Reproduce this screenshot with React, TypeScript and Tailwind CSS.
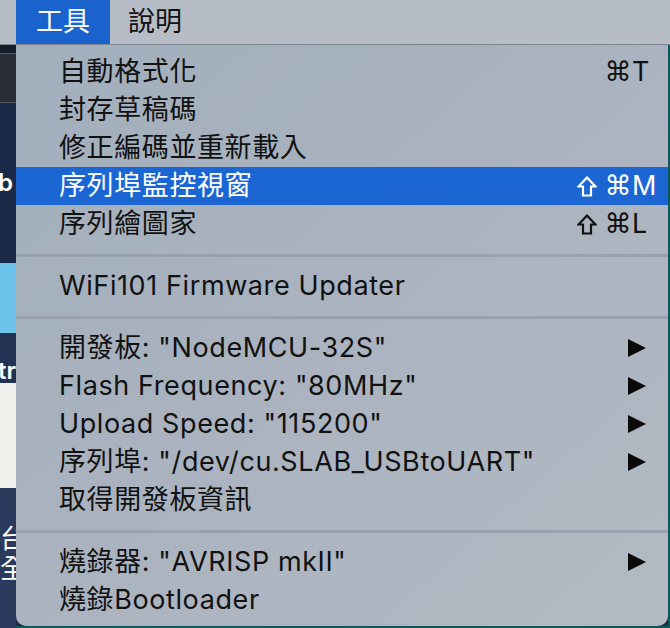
import React from "react";

type Item =
  | { kind: "sep" }
  | {
      kind: "item";
      label: string;
      shift?: boolean;
      keyChar?: string;
      sub?: boolean;
      active?: boolean;
    };

const items: Item[] = [
  { kind: "item", label: "自動格式化", keyChar: "T" },
  { kind: "item", label: "封存草稿碼" },
  { kind: "item", label: "修正編碼並重新載入" },
  { kind: "item", label: "序列埠監控視窗", shift: true, keyChar: "M", active: true },
  { kind: "item", label: "序列繪圖家", shift: true, keyChar: "L" },
  { kind: "sep" },
  { kind: "item", label: "WiFi101 Firmware Updater" },
  { kind: "sep" },
  { kind: "item", label: '開發板: "NodeMCU-32S"', sub: true },
  { kind: "item", label: 'Flash Frequency: "80MHz"', sub: true },
  { kind: "item", label: 'Upload Speed: "115200"', sub: true },
  { kind: "item", label: '序列埠: "/dev/cu.SLAB_USBtoUART"', sub: true },
  { kind: "item", label: "取得開發板資訊" },
  { kind: "sep" },
  { kind: "item", label: '燒錄器: "AVRISP mkII"', sub: true },
  { kind: "item", label: "燒錄Bootloader" },
];

const font = { fontFamily: 'Inter, "Noto Sans CJK TC", sans-serif' };

const Arrow = ({ white }: { white?: boolean }) => (
  <svg width="18" height="18" viewBox="0 0 18 18" className="mr-[16px]">
    <polygon points="0,0 18,9 0,18" fill={white ? "#fff" : "#0a0a0a"} />
  </svg>
);

// outlined shift arrow ⇧
const Shift = () => (
  <svg width="20" height="21" viewBox="0 0 20 21" className="mr-[7px]">
    <polygon
      points="10,1.5 18.5,10.5 14,10.5 14,19.5 6,19.5 6,10.5 1.5,10.5"
      fill="none"
      stroke="currentColor"
      strokeWidth="2.2"
      strokeLinejoin="miter"
    />
  </svg>
);

const MenuRow = ({ item }: { item: Item }) => {
  if (item.kind === "sep") {
    return (
      <div className="h-[24px] flex items-center">
        <div className="w-full h-[3px] bg-[#98a1ad]" />
      </div>
    );
  }
  return (
    <div
      className={`h-[38px] flex items-center pl-[43px] pr-[6px] text-[27px] tracking-[0.6px] ${
        item.active ? "bg-[#1b66d2] text-white" : "text-[#111]"
      }`}
    >
      <span className="flex-1 whitespace-nowrap">{item.label}</span>
      {item.keyChar && (
        <span className="flex items-center">
          {item.shift && <Shift />}
          <span
            className="text-[27px]"
            style={{ fontFamily: '"DejaVu Sans", sans-serif' }}
          >
            ⌘
          </span>
          <span className="w-[30px]">{item.keyChar}</span>
        </span>
      )}
      {item.sub && <Arrow white={item.active} />}
    </div>
  );
};

const App = () => {
  return (
    <div
      className="w-[670px] h-[628px] overflow-hidden flex flex-col bg-[#1d2b47]"
      style={font}
    >
      {/* menu bar */}
      <div className="h-[45px] flex bg-[#b7bdc6] border-b border-[#7c848e] text-[27px] shrink-0">
        <div className="w-[16px]" />
        <div className="h-full w-[94px] bg-[#1b63cc] text-white flex items-center justify-center">
          工具
        </div>
        <div className="h-full px-[18px] flex items-center text-[#111]">說明</div>
      </div>

      <div className="flex flex-1">
        {/* desktop peeking out on the left */}
        <div className="w-[16px] flex flex-col overflow-hidden text-white text-[24px] font-semibold">
          <div className="h-[8px] bg-[#141c2a]" />
          <div className="h-[50px] bg-[#2b2e35] border-y border-[#555a62]" />
          <div className="h-[160px] bg-[#1a2a48] flex items-center">
            <span className="ml-[-2px]">b</span>
          </div>
          <div className="h-[70px] bg-[#6cc3ea]" />
          <div className="h-[50px] bg-[#223253] flex items-end">
            <span className="ml-[-2px] leading-none">tr</span>
          </div>
          <div className="h-[105px] bg-[#f2f0ec]" />
          <div className="flex-1 bg-[#2a3a5c] text-[26px] font-normal leading-[30px] pt-[36px]">
            <div>台</div>
            <div>全</div>
          </div>
        </div>

        <div className="flex-1 flex flex-col">
          <div className="flex-1 bg-gradient-to-br from-[#a3afbd] via-[#aab3bf] to-[#b2bac3] rounded-b-[10px] pt-[8px] pb-[7px]">
            {items.map((it, i) => (
              <MenuRow key={i} item={it} />
            ))}
          </div>
          <div className="h-[3px] bg-[#0d5959]" />
        </div>
        <div className="w-[2px] bg-[#0d5959]" />
      </div>
    </div>
  );
};

export default App;
